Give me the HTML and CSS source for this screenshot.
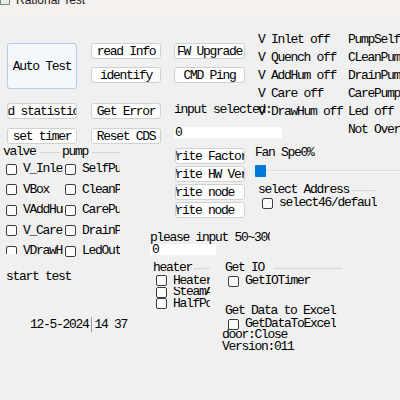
FILE: index.html
```html
<!DOCTYPE html>
<html>
<head>
<meta charset="utf-8">
<title>Rational Test</title>
<link rel="stylesheet" href="styles.css">
</head>
<body>
<div class="titlebar"><span class="app-icon"></span><span class="title">Rational Test</span></div>

<div class="band band-top">
  <div class="col col-a">
    <button class="btn btn-default"><span>Auto Test</span></button>
    <button class="btn btn-clip mt14"><span class="shift-stat">read statistics</span></button>
    <button class="btn mt9"><span>set timer</span></button>
  </div>
  <div class="col col-b">
    <button class="btn"><span>read Info</span></button>
    <button class="btn mt8"><span>identify</span></button>
    <button class="btn mt20"><span>Get Error</span></button>
    <button class="btn mt9"><span>Reset CDS</span></button>
  </div>
  <div class="col col-c">
    <button class="btn"><span>FW Upgrade</span></button>
    <button class="btn mt8"><span>CMD Ping</span></button>
    <div class="lbl input-sel">input selected:</div>
    <div class="textbox tb-sel">0</div>
  </div>
  <div class="col col-d">
    <div class="row">V Inlet off</div>
    <div class="row">V Quench off</div>
    <div class="row">V AddHum off</div>
    <div class="row">V Care off</div>
    <div class="row">V DrawHum off</div>
  </div>
  <div class="col col-e">
    <div class="row">PumpSelf off</div>
    <div class="row">CLeanPump off</div>
    <div class="row">DrainPump off</div>
    <div class="row">CarePump off</div>
    <div class="row">Led off</div>
    <div class="row">Not Overflow</div>
  </div>
</div>

<div class="band band-mid">
  <div class="group g-valve">
    <div class="legend"><span>valve</span></div>
    <div class="chk"><i class="box"></i><span>V_Inlet</span></div>
    <div class="chk"><i class="box"></i><span>VBox</span></div>
    <div class="chk"><i class="box"></i><span>VAddHum</span></div>
    <div class="chk"><i class="box"></i><span>V_Care</span></div>
    <div class="chk"><i class="box"></i><span>VDrawHum</span></div>
  </div>
  <div class="group g-pump">
    <div class="legend"><span>pump</span></div>
    <div class="chk"><i class="box"></i><span>SelfPump</span></div>
    <div class="chk"><i class="box"></i><span>CleanPump</span></div>
    <div class="chk"><i class="box"></i><span>CarePump</span></div>
    <div class="chk"><i class="box"></i><span>DrainPump</span></div>
    <div class="chk"><i class="box"></i><span>LedOut</span></div>
  </div>
  <div class="col col-mid">
    <button class="btn btn-w"><span>Write Factory</span></button>
    <button class="btn btn-w"><span>Write HW Ver</span></button>
    <button class="btn btn-w"><span>Write node</span></button>
    <button class="btn btn-w"><span>Write node</span></button>
    <div class="lbl please">please input 50~300</div>
    <div class="textbox tb-please">0</div>
  </div>
  <div class="col col-right">
    <div class="lbl fan">Fan Spe0%</div>
    <div class="slider"><span class="thumb"></span><span class="track"></span></div>
    <div class="group g-addr">
      <div class="legend"><span>select Address</span></div>
      <div class="chk"><i class="box"></i><span>select46/default</span></div>
    </div>
  </div>
</div>

<div class="band band-bot">
  <div class="col col-status">
    <div class="lbl start">start test</div>
    <div class="date">12-5-2024<span class="sep"></span>14 37</div>
  </div>
  <div class="group g-heater">
    <div class="legend"><span>heater</span></div>
    <div class="chk"><i class="box"></i><span>Heater</span></div>
    <div class="chk"><i class="box"></i><span>SteamAdd</span></div>
    <div class="chk"><i class="box"></i><span>HalfPower</span></div>
  </div>
  <div class="col col-io">
    <div class="group g-io">
      <div class="legend"><span>Get IO</span></div>
      <div class="chk"><i class="box"></i><span>GetIOTimer</span></div>
    </div>
    <div class="legend plain excel"><span>Get Data to Excel</span></div>
    <div class="chk chk-excel"><i class="box"></i><span>GetDataToExcel</span></div>
    <div class="lbl info door">door:Close</div>
    <div class="lbl info">Version:011</div>
  </div>
</div>
</body>
</html>
```

FILE: styles.css
```css
* { box-sizing: border-box; margin: 0; padding: 0; }

html, body { width: 400px; height: 400px; }

body {
  overflow: hidden;
  background: #f0f0f0;
  color: #000;
  font-family: "Liberation Mono", "DejaVu Sans Mono", monospace;
  font-size: 13px;
  letter-spacing: -1.3px;
  line-height: 14px;
}

.titlebar {
  height: 14px;
  background: #f4f1ef;
  display: flex;
  align-items: flex-start;
  overflow: hidden;
  font-family: "Liberation Sans", Arial, sans-serif;
  font-size: 12px;
  letter-spacing: 0;
  line-height: 12px;
  color: #1b1b1b;
}
.app-icon {
  width: 10px;
  height: 5px;
  flex: none;
  background: #e6ece8;
  border: 1px solid #7d8b84;
  border-top: none;
  margin-right: 6px;
}
.title { margin-top: -6px; white-space: nowrap; }

.band { display: flex; align-items: flex-start; }
.col { flex: none; display: flex; flex-direction: column; align-items: flex-start; }

.btn {
  font: inherit;
  letter-spacing: inherit;
  color: inherit;
  width: 70px;
  height: 16px;
  background: #fdfdfd;
  border: 1px solid #d0d0d0;
  border-radius: 3px;
  display: flex;
  align-items: center;
  justify-content: center;
  overflow: hidden;
  white-space: nowrap;
  padding-top: 2px;
}
.btn span { flex: none; }
.btn-default {
  height: 46px;
  background: #f4f8fc;
  border-color: #b4cce6;
}
.btn-clip { justify-content: flex-start; }
.shift-stat { margin-left: -20px; }
.btn-w { justify-content: flex-start; margin-bottom: 2px; }
.btn-w span { margin-left: -7px; }

.mt8 { margin-top: 8px; }
.mt9 { margin-top: 9px; }
.mt14 { margin-top: 14px; }
.mt20 { margin-top: 20px; }

.col-a { margin-left: 7px; padding-top: 29px; }
.col-b { margin-left: 14px; padding-top: 29px; }
.col-c { margin-left: 13px; padding-top: 29px; width: 71px; }
.col-c .btn { width: 71px; }
.col-d { margin-left: 13px; padding-top: 17px; width: 90px; }
.col-e { padding-top: 17px; }

.row { line-height: 18px; height: 18px; white-space: nowrap; }
.lbl { white-space: nowrap; }

.input-sel { margin-top: 20px; }
.textbox {
  background: #fff;
  height: 11px;
  line-height: 12px;
  padding-left: 1px;
  overflow: hidden;
}
.tb-sel { margin-top: 10px; width: 108px; }

.band-mid { height: 114px; }

.group { flex: none; display: flex; flex-direction: column; }
.legend { flex: none; display: flex; align-items: center; height: 14px; white-space: nowrap; }
.legend::after {
  content: "";
  flex: 1;
  height: 1px;
  background: #d5d5d5;
  margin-left: 4px;
}
.legend.plain::after { display: none; }

.chk {
  flex: none;
  display: flex;
  align-items: center;
  white-space: nowrap;
  overflow: hidden;
}
.box {
  flex: none;
  width: 11px;
  height: 11px;
  border: 1px solid #3c3c3c;
  border-radius: 2px;
  background: #fbfbfb;
  margin-left: 3px;
  margin-right: 6px;
}
.chk span { flex: none; }

.g-valve { margin-left: 3px; width: 60px; height: 109px; overflow: hidden; margin-top: 1px; }
.g-valve .legend { margin-right: 3px; }
.g-valve .chk, .g-pump .chk { height: 20.5px; }
.g-pump { margin-left: -1px; width: 58px; margin-top: 1px; }

.col-mid { margin-left: 30px; width: 105px; padding-top: 4px; }
.col-mid .btn-w { margin-left: 25px; }
.please { margin-top: 11px; width: 120px; overflow: hidden; }
.tb-please { margin-top: -1px; width: 66px; padding-left: 2px; }

.col-right { padding-top: 2px; width: 145px; }
.slider { display: flex; align-items: center; width: 145px; height: 12px; margin-top: 5px; }
.thumb { flex: none; width: 11px; height: 12px; background: #0078d7; border-radius: 1px; }
.track { flex: 1; height: 2px; background: #dcdcdc; border-bottom: 1px solid #fafafa; }

.g-addr { margin-left: 3px; margin-top: 6px; width: 119px; }
.g-addr .legend { margin-right: 2px; }
.g-addr .legend::after { margin-left: 3px; }
.g-addr .chk { height: 12px; }
.g-addr .box { margin-left: 4px; }

.col-status { margin-left: 6px; width: 147px; }
.start { margin-top: 12px; }
.date { margin-top: 33px; margin-left: 24px; display: flex; align-items: center; white-space: nowrap; }
.sep { display: inline-block; width: 1px; height: 15px; background: #9a9a9a; margin: 0 3px 0 2px; }

.g-heater { margin-top: 3px; width: 57px; }
.g-heater .legend::after { margin-left: 2px; }
.g-heater .chk { height: 11.5px; }

.col-io { margin-left: 15px; margin-top: 3px; width: 117px; }
.g-io { width: 117px; }
.g-io .legend::after { margin-left: 10px; }
.g-io .chk { height: 12px; }
.excel { margin-top: 17px; }
.chk-excel { height: 12px; }
.info { line-height: 12px; height: 12px; margin-left: -3px; }
.door { margin-top: -1px; }
```
